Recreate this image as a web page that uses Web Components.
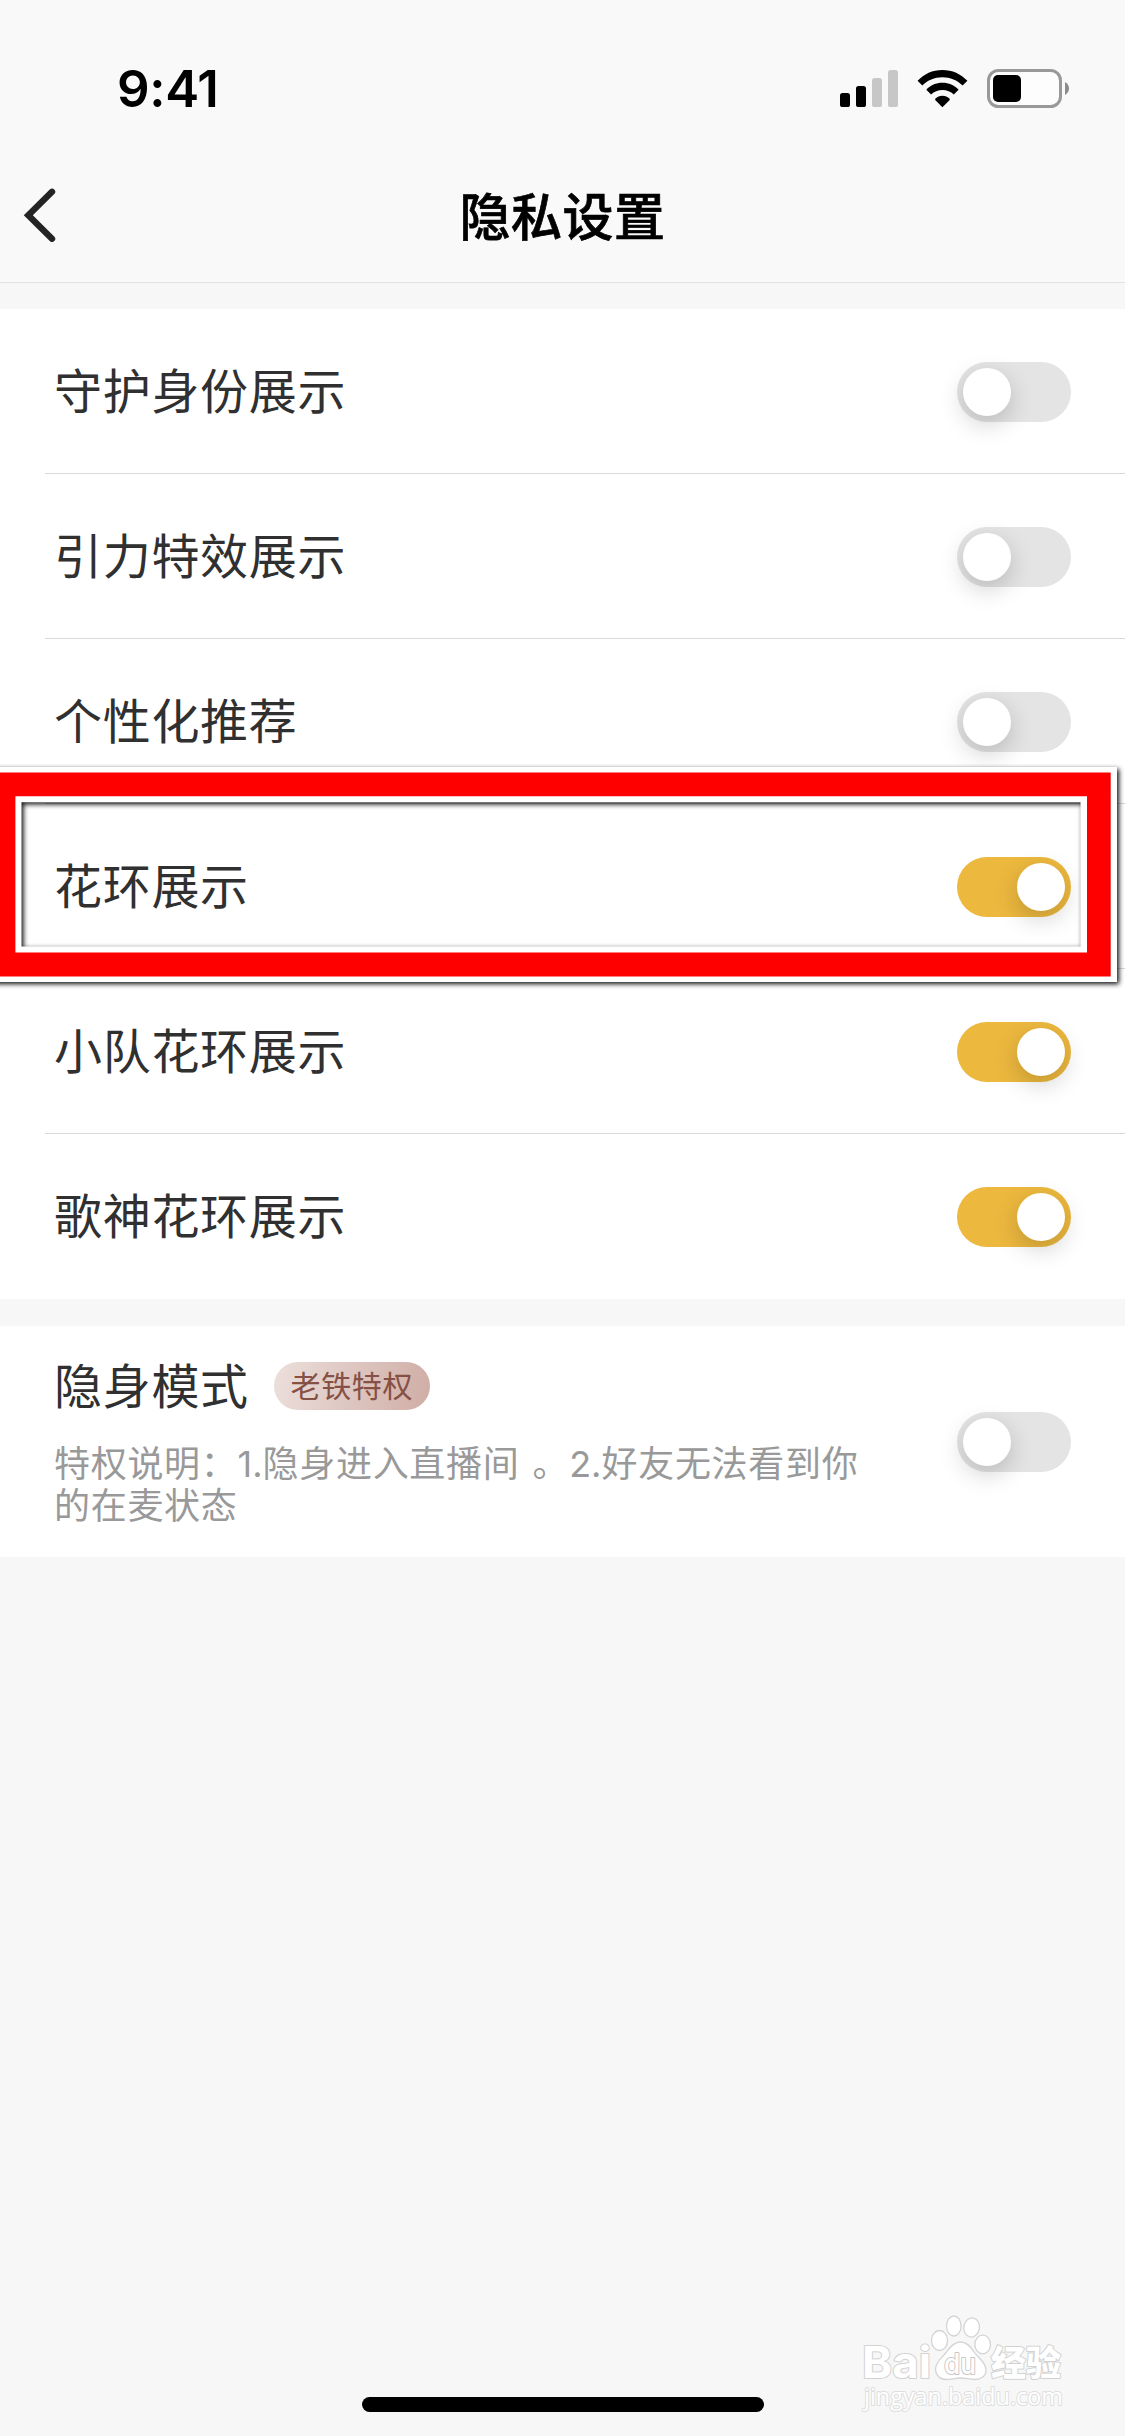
<!DOCTYPE html>
<html lang="zh-CN">
<head>
<meta charset="utf-8">
<title>隐私设置</title>
<style>
html,body{margin:0;padding:0;background:#f7f7f7}
body{width:1125px;height:2436px;overflow:hidden;font-family:"Noto Sans CJK SC","Liberation Sans",sans-serif}
</style>
</head>
<body>
<privacy-page></privacy-page>
<script>
function define(name, html) {
  const t = document.createElement('template');
  t.innerHTML = html;
  customElements.define(name, class extends HTMLElement {
    constructor() {
      super();
      this.attachShadow({ mode: 'open' }).appendChild(t.content.cloneNode(true));
    }
  });
}

define('status-bar', `
<style>
:host{display:flex;height:132px;padding:45px 56px 0 117px;box-sizing:border-box;justify-content:space-between;align-items:flex-start}
.time{font:600 51px/88px Inter,sans-serif;letter-spacing:-.3px;color:#000}
svg{display:block;margin-top:23px}
</style>
<span class="time">9:41</span>
<svg width="229" height="42" viewBox="840 68 229 42">
  <rect x="840" y="93" width="10" height="14" rx="2.6"/>
  <rect x="856" y="86" width="10" height="21" rx="2.6"/>
  <rect x="872" y="78" width="10" height="29" rx="2.6" fill="#c7c7c7"/>
  <rect x="888" y="70" width="10" height="37" rx="2.6" fill="#c7c7c7"/>
  <path d="M917.6 80.8C924 74 932.5 70 942.4 70C952.300 70 961 74 967.400 80.800L962.600 85.500C957.300 80.200 950.300 77.200 942.400 77.200C934.500 77.200 927.500 80.200 922.300 85.500Z"/>
  <path d="M926.300 89.700C930.600 85.300 936 82.800 942.400 82.800C948.800 82.800 954.300 85.300 958.600 89.700L953.800 94.600C950.700 91.600 947 90 942.400 90C937.900 90 934.200 91.600 931.100 94.600Z"/>
  <path d="M935.200 98.700C937.300 96.700 939.600 95.700 942.400 95.700C945.200 95.700 947.600 96.700 949.700 98.700L949.700 99.900L942.400 107.200L935.200 99.900Z"/>
  <rect x="988.500" y="70.500" width="72" height="36" rx="10" fill="#fdfdfd" stroke="#999" stroke-width="3"/>
  <rect x="993" y="75" width="28" height="27" rx="5"/>
  <path d="M1065 82C1067.600 83.200 1069 85.700 1069 88.500S1067.600 93.800 1065 95Z" fill="#8c8c8c"/>
</svg>`);

define('nav-bar', `
<style>
:host{display:grid;grid-template-columns:80px 1fr 80px;height:150px;align-items:center}
svg{display:block;margin-left:20px;margin-top:15px}
h1{margin:14px 0 0;text-align:center;font-size:51px;line-height:72px;font-weight:500;letter-spacing:.5px;color:#000;-webkit-text-stroke:.7px #000}
</style>
<svg width="38" height="54" viewBox="20 188 38 54"><path d="M52 191.800L28.300 215.300L52 238.800" fill="none" stroke="#242424" stroke-width="6.400" stroke-linejoin="miter" stroke-linecap="round"/></svg>
<h1><slot></slot></h1>`);

define('toggle-switch', `
<style>
:host{display:flex;flex:none;box-sizing:border-box;width:114px;height:60px;padding:6px;border-radius:30px;background:#e4e4e4}
i{width:48px;height:48px;border-radius:50%;background:#fff;box-shadow:0 8px 24px rgba(0,0,0,.19)}
:host([on]){background:#ecb83e;justify-content:flex-end}
</style><i></i>`);

define('setting-row', `
<style>
:host{display:block;height:165px;padding-left:45px;box-sizing:border-box}
div{display:flex;justify-content:space-between;align-items:center;height:165px;box-sizing:border-box;padding:1px 54px 0 9px;border-bottom:1px solid #d9d9d9}
:host([last]) div{border-color:transparent}
span{font-size:48px;line-height:70px;letter-spacing:.7px;color:#303030;margin-bottom:7px}
</style>
<div><span><slot></slot></span><slot name="control"></slot></div>`);

define('setting-card', `<style>:host{display:block;background:#fff;margin-bottom:27px}</style><slot></slot>`);

define('privilege-row', `
<style>
:host{display:flex;height:231px;box-sizing:border-box;padding:0 54px;justify-content:space-between;align-items:center}
.body{display:flex;flex-direction:column;align-self:flex-start;padding-top:25px}
.head{display:flex;align-items:center;gap:25px;height:70px}
.name{font-size:48px;line-height:70px;letter-spacing:.7px;color:#303030;margin-bottom:7px}
.tag{box-sizing:border-box;width:156px;height:48px;border-radius:24px;text-align:center;background:linear-gradient(100deg,#ecdfdc,#cfada5);font-size:30px;line-height:45px;letter-spacing:.6px;color:#865044}
.desc{font-family:"Liberation Sans","Noto Sans CJK SC",sans-serif;font-size:36px;line-height:42px;letter-spacing:.7px;color:#999;padding-top:23px;white-space:nowrap}
</style>
<div class="body">
  <div class="head"><span class="name"><slot></slot></span><span class="tag"><slot name="tag"></slot></span></div>
  <div class="desc"><slot name="desc"></slot></div>
</div>
<slot name="control"></slot>`);

define('highlight-frame', `
<style>:host{display:block;position:absolute;left:0;top:750px;pointer-events:none}svg{display:block;overflow:hidden}</style>
<svg width="1125" height="250" viewBox="0 750 1125 250">
  <path fill="#fff" fill-rule="evenodd" style="filter:drop-shadow(2.5px 2.5px 2.8px rgba(0,0,0,.95))" d="M-30 767H1117V982H-30ZM21.500 802.300V946.500H1080.500V802.300Z"/>
  <path fill="#f00" fill-rule="evenodd" d="M-30 772.400H1110.700V976.400H-30ZM15.400 796.300V952.400H1087V796.300Z"/>
</svg>`);

define('water-mark', `
<style>:host{display:block;position:absolute;left:855px;top:2310px}svg{display:block}
text{fill:#fff;stroke:#d2d2d2;stroke-width:2px;paint-order:stroke;stroke-linejoin:round}</style>
<svg width="215" height="106" viewBox="855 2310 215 106">
  <text x="862" y="2378" font-family="Inter" font-weight="700" font-size="44" textLength="69" lengthAdjust="spacingAndGlyphs">Bai</text>
  <g fill="#fff" stroke="#d4d4d4" stroke-width="1.300">
    <ellipse cx="939.500" cy="2340.500" rx="8" ry="10"/>
    <ellipse cx="953.800" cy="2326" rx="7.300" ry="10"/>
    <ellipse cx="971.600" cy="2327.500" rx="7.800" ry="9.600" transform="rotate(10 971.600 2327.500)"/>
    <ellipse cx="982.700" cy="2344.500" rx="7.800" ry="9.300"/>
    <path d="M960.500 2342C967 2342 971 2347 974 2352C978 2358 986 2362 986 2370C986 2376 981 2379.500 975 2379.500C969 2379.500 966 2378 960.500 2378C955 2378 951 2379.500 946 2379.500C940 2379.500 935.500 2375 935.500 2369C935.500 2362 942 2358 946.500 2352C950 2347 954 2342 960.500 2342Z"/>
  </g>
  <text x="944" y="2373.500" font-family="Inter" font-weight="500" font-size="28" textLength="32" lengthAdjust="spacingAndGlyphs" style="stroke:#c8c8c8">du</text>
  <text x="991" y="2375.500" font-family="Noto Sans CJK SC" font-weight="900" font-size="35" textLength="70" lengthAdjust="spacingAndGlyphs">经验</text>
  <text x="864" y="2405" font-family="Open Sans" font-weight="400" font-size="24" textLength="199" lengthAdjust="spacingAndGlyphs" style="stroke:#dedede">jingyan.baidu.com</text>
</svg>`);

define('home-indicator', `<style>:host{display:block;width:402px;height:15px;border-radius:8px;background:#000;margin:auto auto 24px}</style>`);

define('privacy-page', `
<style>
:host{display:flex;flex-direction:column;position:relative;width:1125px;height:2436px;overflow:hidden;background:#f7f7f7}
header{background:#f9f9f9;border-bottom:1px solid #e2e2e2;margin-bottom:26px}
.n{font-family:Inter,sans-serif;line-height:0;letter-spacing:0}
.s{letter-spacing:3px}
</style>
<header><status-bar></status-bar><nav-bar>隐私设置</nav-bar></header>
<setting-card>
  <setting-row>守护身份展示<toggle-switch slot="control"></toggle-switch></setting-row>
  <setting-row>引力特效展示<toggle-switch slot="control"></toggle-switch></setting-row>
  <setting-row>个性化推荐<toggle-switch slot="control"></toggle-switch></setting-row>
  <setting-row>花环展示<toggle-switch slot="control" on></toggle-switch></setting-row>
  <setting-row>小队花环展示<toggle-switch slot="control" on></toggle-switch></setting-row>
  <setting-row last>歌神花环展示<toggle-switch slot="control" on></toggle-switch></setting-row>
</setting-card>
<setting-card>
  <privilege-row>隐身模式<span slot="tag">老铁特权</span><span slot="desc">特权说明：<span class="n">1.</span>隐身进入直播间<span class="s"> </span>。<span class="n">2.</span>好友无法看到你<br>的在麦状态</span><toggle-switch slot="control"></toggle-switch></privilege-row>
</setting-card>
<home-indicator></home-indicator>
<highlight-frame></highlight-frame>
<water-mark></water-mark>`);
</script>
</body>
</html>
